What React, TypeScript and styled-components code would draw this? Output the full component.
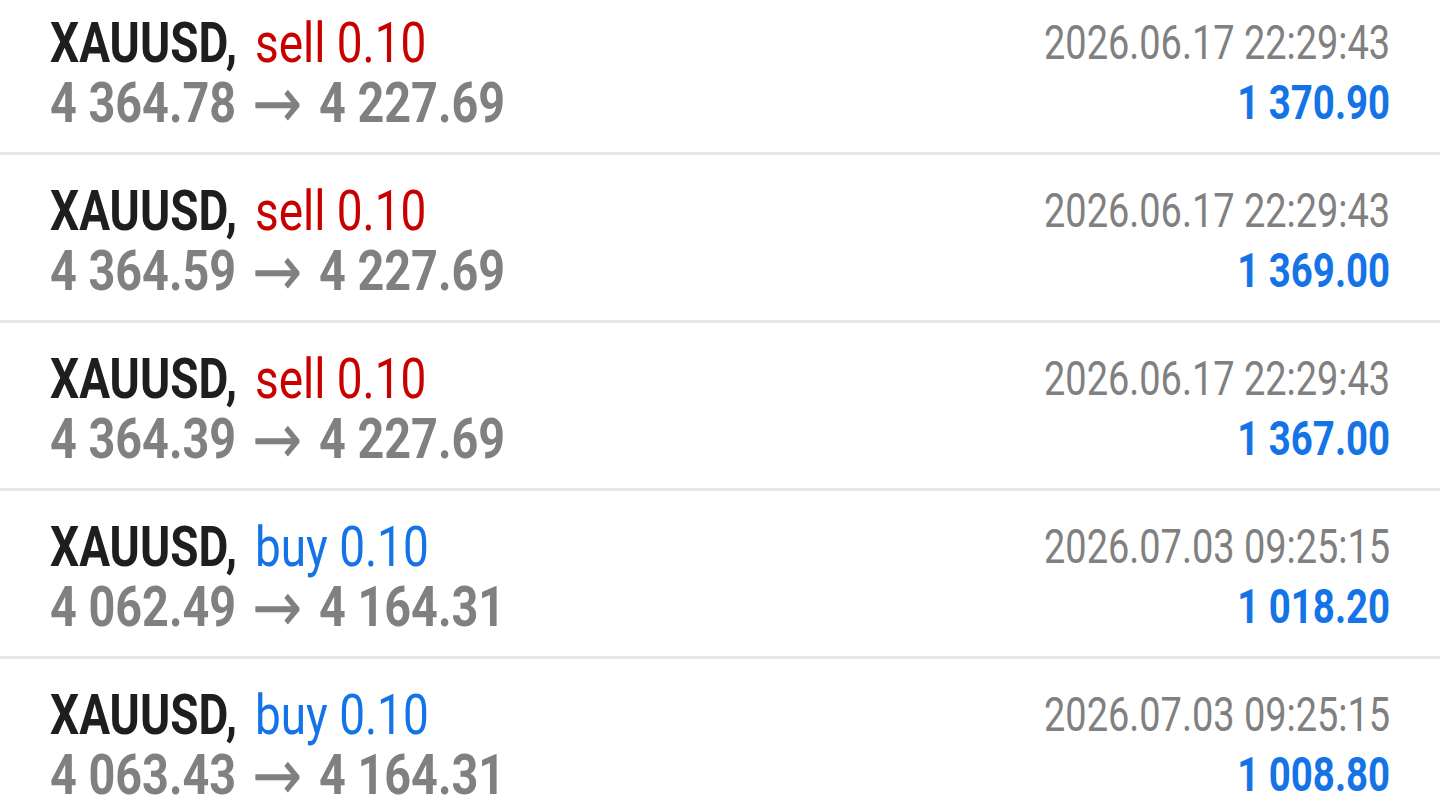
import styled, { createGlobalStyle } from "styled-components";

const GlobalStyle = createGlobalStyle`
  html, body {
    margin: 0;
    padding: 0;
    background: #ffffff;
    overflow: hidden;
  }
  body {
    font-family: Roboto, "Noto Sans", sans-serif;
  }
`;

const List = styled.div`
  margin-top: -13px;
  width: 1440px;
`;

const Row = styled.div`
  display: flex;
  justify-content: space-between;
  padding: 26px 50px 19px 50px;
  border-bottom: 3px solid #e8e8e8;
`;

const Col = styled.div<{ right?: boolean }>`
  display: flex;
  flex-direction: column;
  align-items: ${({ right }) => (right ? "flex-end" : "flex-start")};
`;

// the app uses a condensed face; Roboto is narrowed to match
const Line = styled.div<{ right?: boolean; squeeze: number; size: number }>`
  height: 60px;
  line-height: 60px;
  font-size: ${({ size }) => size}px;
  white-space: nowrap;
  transform: scaleX(${({ squeeze }) => squeeze});
  transform-origin: ${({ right }) => (right ? "right" : "left")} center;
`;

const Symbol = styled.span`
  font-weight: 700;
  color: #1e1e1e;
`;

const Side = styled.span<{ kind: "buy" | "sell" }>`
  margin-left: 8px;
  font-weight: 400;
  color: ${({ kind }) => (kind === "sell" ? "#c80000" : "#1473e6")};
`;

const Prices = styled.span`
  font-weight: 700;
  color: #808080;
`;

const Arrow = styled.span`
  display: inline-block;
  margin: 0 6px 0 5px;
  font-family: "DejaVu Sans", sans-serif;
  font-weight: 400;
  font-size: 72px;
  line-height: 0;
  vertical-align: -6px;
`;

const Time = styled.span`
  font-weight: 400;
  color: #808080;
`;

const Profit = styled.span`
  font-weight: 700;
  color: #1473e6;
`;

type Deal = {
  side: "buy" | "sell";
  open: string;
  close: string;
  time: string;
  profit: string;
};

const deals: Deal[] = [
  { side: "sell", open: "4 364.78", close: "4 227.69", time: "2026.06.17 22:29:43", profit: "1 370.90" },
  { side: "sell", open: "4 364.59", close: "4 227.69", time: "2026.06.17 22:29:43", profit: "1 369.00" },
  { side: "sell", open: "4 364.39", close: "4 227.69", time: "2026.06.17 22:29:43", profit: "1 367.00" },
  { side: "buy", open: "4 062.49", close: "4 164.31", time: "2026.07.03 09:25:15", profit: "1 018.20" },
  { side: "buy", open: "4 063.43", close: "4 164.31", time: "2026.07.03 09:25:15", profit: "1 008.80" },
];

const App = () => {
  return (
    <>
      <GlobalStyle />
      <List>
        {deals.map((d, i) => (
          <Row key={i}>
            <Col>
              <Line size={56} squeeze={0.82}>
                <Symbol>XAUUSD,</Symbol> <Side kind={d.side}>{d.side} 0.10</Side>
              </Line>
              <Line size={56} squeeze={0.835}>
                <Prices>
                  {d.open} <Arrow>→</Arrow> {d.close}
                </Prices>
              </Line>
            </Col>
            <Col right>
              <Line right size={48} squeeze={0.79}>
                <Time>{d.time}</Time>
              </Line>
              <Line right size={48} squeeze={0.8}>
                <Profit>{d.profit}</Profit>
              </Line>
            </Col>
          </Row>
        ))}
      </List>
    </>
  );
};

export default App;
